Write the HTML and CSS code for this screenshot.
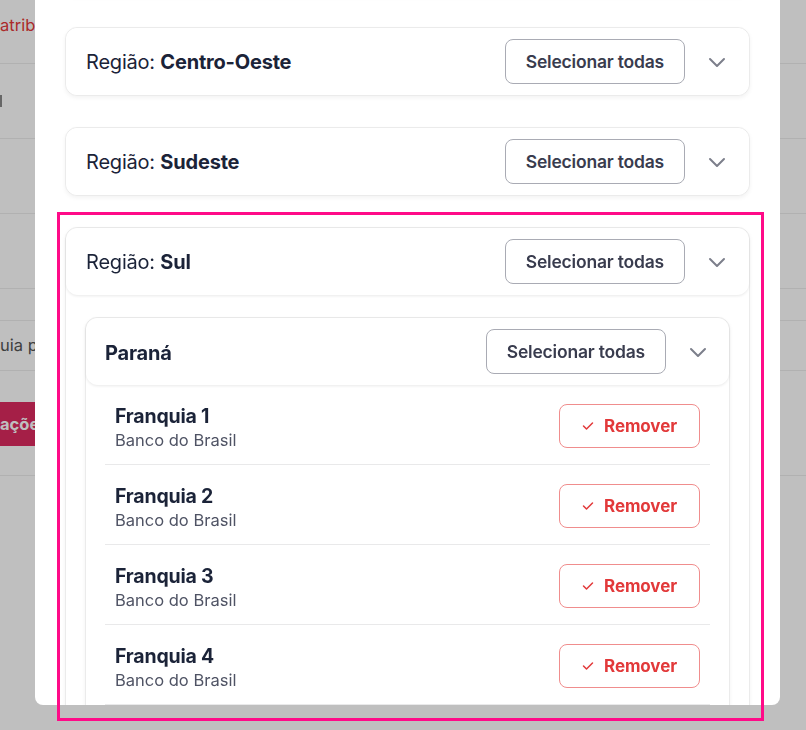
FILE: index.html
```html
<!DOCTYPE html>
<html lang="pt-BR">
<head>
<meta charset="utf-8">
<title>Selecionar franquias</title>
<link rel="stylesheet" href="styles.css">
</head>
<body>
  <div class="page">
    <div class="bg-row bg-row-1"><span class="bg-cell bg-link">atribuir franquias</span></div>
    <div class="bg-row bg-row-2"><span class="bg-mark"></span></div>
    <div class="bg-row bg-row-3"></div>
    <div class="bg-row bg-row-4"></div>
    <div class="bg-row bg-row-5"></div>
    <div class="bg-row bg-row-6"><span class="bg-cell bg-text">uia para atribuição</span></div>
    <div class="bg-row bg-row-7"><span class="bg-cell bg-button">ações</span></div>
  </div>

  <div class="overlay"></div>

  <div class="modal">
    <div class="modal-body">
      <div class="region-list">
        <section class="card">
          <header class="card-head">
            <h3 class="region-title">Região: <b>Nordeste</b></h3>
            <button class="btn-outline">Selecionar todas</button>
            <span class="chevron"><svg viewBox="0 0 24 24" width="24" height="24"><path d="M5 9l7 7 7-7"/></svg></span>
          </header>
        </section>

        <section class="card">
          <header class="card-head">
            <h3 class="region-title">Região: <b>Centro-Oeste</b></h3>
            <button class="btn-outline">Selecionar todas</button>
            <span class="chevron"><svg viewBox="0 0 24 24" width="24" height="24"><path d="M5 9l7 7 7-7"/></svg></span>
          </header>
        </section>

        <section class="card">
          <header class="card-head">
            <h3 class="region-title">Região: <b>Sudeste</b></h3>
            <button class="btn-outline">Selecionar todas</button>
            <span class="chevron"><svg viewBox="0 0 24 24" width="24" height="24"><path d="M5 9l7 7 7-7"/></svg></span>
          </header>
        </section>

        <section class="card card-open">
          <header class="card-head">
            <h3 class="region-title">Região: <b>Sul</b></h3>
            <button class="btn-outline">Selecionar todas</button>
            <span class="chevron"><svg viewBox="0 0 24 24" width="24" height="24"><path d="M5 9l7 7 7-7"/></svg></span>
          </header>
          <div class="card-body">
            <section class="card state-card">
              <header class="card-head state-head">
                <h4 class="state-title">Paraná</h4>
                <button class="btn-outline">Selecionar todas</button>
                <span class="chevron"><svg viewBox="0 0 24 24" width="24" height="24"><path d="M5 9l7 7 7-7"/></svg></span>
              </header>
              <ul class="franchise-list">
                <li class="franchise">
                  <div class="franchise-info">
                    <span class="franchise-name">Franquia 1</span>
                    <span class="franchise-bank">Banco do Brasil</span>
                  </div>
                  <button class="btn-remove"><svg viewBox="0 0 12 12" width="12" height="12"><polyline points="1.5,6 4.5,9 10.5,3"/></svg>Remover</button>
                </li>
                <li class="franchise">
                  <div class="franchise-info">
                    <span class="franchise-name">Franquia 2</span>
                    <span class="franchise-bank">Banco do Brasil</span>
                  </div>
                  <button class="btn-remove"><svg viewBox="0 0 12 12" width="12" height="12"><polyline points="1.5,6 4.5,9 10.5,3"/></svg>Remover</button>
                </li>
                <li class="franchise">
                  <div class="franchise-info">
                    <span class="franchise-name">Franquia 3</span>
                    <span class="franchise-bank">Banco do Brasil</span>
                  </div>
                  <button class="btn-remove"><svg viewBox="0 0 12 12" width="12" height="12"><polyline points="1.5,6 4.5,9 10.5,3"/></svg>Remover</button>
                </li>
                <li class="franchise">
                  <div class="franchise-info">
                    <span class="franchise-name">Franquia 4</span>
                    <span class="franchise-bank">Banco do Brasil</span>
                  </div>
                  <button class="btn-remove"><svg viewBox="0 0 12 12" width="12" height="12"><polyline points="1.5,6 4.5,9 10.5,3"/></svg>Remover</button>
                </li>
                <li class="franchise">
                  <div class="franchise-info">
                    <span class="franchise-name">Franquia 5</span>
                    <span class="franchise-bank">Banco do Brasil</span>
                  </div>
                  <button class="btn-remove"><svg viewBox="0 0 12 12" width="12" height="12"><polyline points="1.5,6 4.5,9 10.5,3"/></svg>Remover</button>
                </li>
              </ul>
            </section>
          </div>
        </section>
      </div>
    </div>
  </div>

  <div class="highlight"></div>
</body>
</html>
```

FILE: styles.css
```css
* { box-sizing: border-box; }

html, body {
  margin: 0;
  width: 806px;
  height: 730px;
  overflow: hidden;
}

body {
  font-family: Inter, "Noto Sans", "Liberation Sans", sans-serif;
  background: #ffffff;
  color: #1b2338;
}

/* ---------- page behind the modal ---------- */
.page {
  display: flex;
  flex-direction: column;
}

.bg-row {
  border-bottom: 1px solid #ececec;
  display: flex;
  align-items: flex-start;
  white-space: nowrap;
  overflow: hidden;
}

.bg-row-1 { height: 64px; padding-top: 13px; }
.bg-row-2 { height: 75px; padding-top: 31px; }
.bg-row-3 { height: 75px; }
.bg-row-4 { height: 75px; }
.bg-row-5 { height: 32px; }
.bg-row-6 { height: 50px; padding-top: 12px; }
.bg-row-7 { height: 105px; padding-top: 31px; }

.bg-cell {
  width: 35px;
  overflow: hidden;
  white-space: nowrap;
}

.bg-link {
  font-size: 16.5px;
  line-height: 24px;
  color: #e53838;
}

.bg-mark {
  width: 2px;
  height: 12px;
  background: #8a8a8a;
}

.bg-text {
  font-size: 16.5px;
  line-height: 24px;
  color: #555555;
}

.bg-button {
  display: flex;
  align-items: center;
  height: 44px;
  background: #dc2a5f;
  color: #ffffff;
  font-size: 16.5px;
  font-weight: 700;
}

.overlay {
  position: fixed;
  inset: 0;
  background: rgba(0, 0, 0, 0.25);
}

/* ---------- modal ---------- */
.modal {
  position: fixed;
  top: 0;
  left: 35px;
  width: 745px;
  height: 705px;
  background: #ffffff;
  border-radius: 0 0 8px 8px;
  overflow: hidden;
}

.modal-body {
  padding: 0 30px;
}

.region-list {
  display: flex;
  flex-direction: column;
  gap: 31px;
  margin-top: -73px;
}

.card {
  background: #ffffff;
  border: 1px solid #ebebeb;
  border-radius: 12px;
  box-shadow: 0 2px 4px rgba(0, 0, 0, 0.05);
}

.card-head {
  display: flex;
  align-items: center;
  gap: 20px;
  height: 67px;
  padding: 0 20px;
  border-radius: 12px;
  background: #ffffff;
}

.state-head {
  padding: 0 19px;
}

.card-open > .card-head,
.state-card > .card-head {
  box-shadow: 0 1px 3px rgba(0, 0, 0, 0.09);
  position: relative;
}

.region-title {
  flex: 1;
  margin: 0;
  font-size: 20px;
  font-weight: 400;
  letter-spacing: -0.2px;
  color: #1b2338;
}

.region-title b {
  font-weight: 700;
}

.state-title {
  flex: 1;
  margin: 0;
  padding-top: 2px;
  font-size: 20px;
  font-weight: 700;
  letter-spacing: -0.2px;
  color: #1b2338;
}

.btn-outline {
  height: 45px;
  padding: 0 20px;
  border: 1px solid #a9abb4;
  border-radius: 8px;
  background: #ffffff;
  font-family: inherit;
  font-size: 17.5px;
  font-weight: 600;
  letter-spacing: -0.2px;
  color: #393c4e;
}

.chevron {
  display: flex;
  width: 24px;
  height: 24px;
}

.chevron svg {
  fill: none;
  stroke: #7c7f8b;
  stroke-width: 2;
  stroke-linecap: round;
  stroke-linejoin: round;
}

.card-body {
  padding: 22px 19px 0;
}

.state-card {
  border-radius: 12px;
}

.franchise-list {
  list-style: none;
  margin: 0;
  padding: 0 19px;
}

.franchise {
  display: flex;
  align-items: center;
  justify-content: space-between;
  padding: 19px 10px 16px;
  border-bottom: 1px solid #e9e9ea;
}

.franchise-info {
  display: flex;
  flex-direction: column;
  margin-top: 1px;
  margin-bottom: -3px;
}

.franchise-name {
  font-size: 19.5px;
  font-weight: 700;
  line-height: 22px;
  letter-spacing: -0.2px;
  color: #1b2338;
}

.franchise-bank {
  margin-top: 2px;
  font-size: 16.5px;
  line-height: 22px;
  color: #4f5364;
}

.btn-remove {
  display: flex;
  align-items: center;
  gap: 10px;
  height: 44px;
  padding: 0 22px;
  border: 1px solid #f08d8d;
  border-radius: 8px;
  background: #ffffff;
  font-family: inherit;
  font-size: 17px;
  font-weight: 700;
  letter-spacing: -0.1px;
  color: #e2393a;
}

.btn-remove svg {
  fill: none;
  stroke: #e2393a;
  stroke-width: 1.5;
  stroke-linecap: round;
  stroke-linejoin: round;
}

/* ---------- annotation highlight ---------- */
.highlight {
  position: fixed;
  left: 57px;
  top: 212px;
  width: 707px;
  height: 509px;
  border: 3px solid #ff0a88;
  pointer-events: none;
}
```
